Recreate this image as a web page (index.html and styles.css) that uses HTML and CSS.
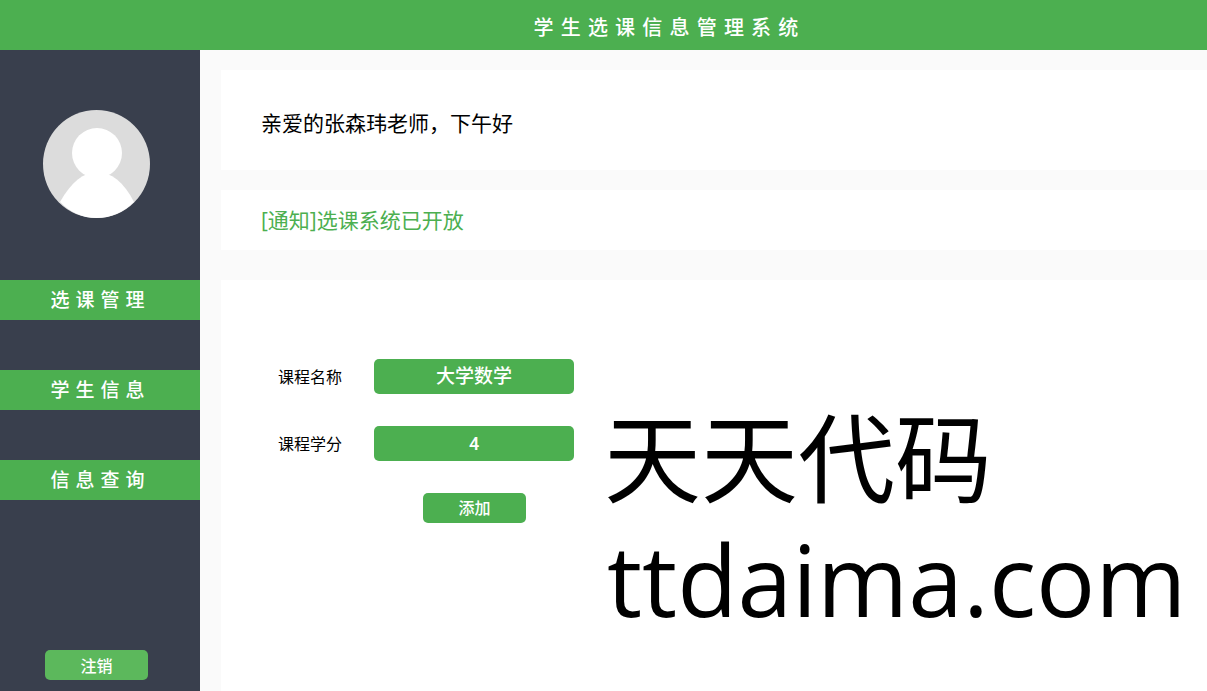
FILE: index.html
```html
<!DOCTYPE html>
<html>
    <head>
        <meta http-equiv="Content-Type" content="text/html; charset=UTF-8">
        <title>学生选课信息管理系统</title>
        <link rel="stylesheet" href="styles.css">
    </head>
    <body>
        <header class="top">学生选课信息管理系统</header>
        <div class="wrap">
            <aside class="side">
                <svg class="avatar" viewBox="0 0 107 108">
                    <ellipse cx="53.5" cy="54" rx="53.5" ry="54" fill="#dcdcdc"/>
                    <circle cx="54" cy="43" r="25" fill="#fff"/>
                    <path d="M17 92C28 72 41 62 54 62C68 62 81 72 91 92C81 102 68 108 53.5 108C39 108 27 102 17 92Z" fill="#fff"/>
                </svg>
                <ul class="nav">
                    <li>选课管理</li>
                    <li>学生信息</li>
                    <li>信息查询</li>
                </ul>
                <button class="logout">注销</button>
            </aside>
            <main class="content">
                <section class="card hello">亲爱的张森玮老师，下午好</section>
                <section class="card notice">[通知]选课系统已开放</section>
                <section class="card panel">
                    <div class="row">
                        <label>课程名称</label>
                        <div class="field">大学数学</div>
                    </div>
                    <div class="row">
                        <label>课程学分</label>
                        <div class="field field-num">4</div>
                    </div>
                    <button class="add">添加</button>
                </section>
            </main>
        </div>
        <div class="mark">
            <div class="mark-cn">天天代码</div>
            <div class="mark-en">ttdaima.com</div>
        </div>
    </body>
</html>
```

FILE: styles.css
```css
html {
    height: 100%;
}
body {
    height: 100%;
    margin: 0;
    overflow: hidden;
    display: flex;
    flex-direction: column;
    background: #fafafa;
    font-family: "Open Sans", "Noto Sans CJK SC", sans-serif;
}
.top {
    flex: none;
    height: 50px;
    line-height: 55px;
    background: #4caf50;
    color: white;
    text-align: center;
    font-size: 20px;
    font-weight: 500;
    letter-spacing: 7.2px;
    padding-left: 132px;
}
.wrap {
    flex: 1;
    display: flex;
    min-height: 0;
}
.side {
    flex: none;
    width: 200px;
    background: #393f4d;
    display: flex;
    flex-direction: column;
    align-items: center;
}
.avatar {
    display: block;
    width: 107px;
    height: 108px;
    margin-top: 60px;
    margin-right: 7px;
}
.nav {
    list-style: none;
    width: 100%;
    margin: 62px 0 0;
    padding: 0;
}
.nav li {
    height: 40px;
    line-height: 41px;
    margin-bottom: 50px;
    background: #4caf50;
    color: white;
    text-align: center;
    font-size: 19px;
    font-weight: 500;
    letter-spacing: 6px;
    padding-left: 1px;
}
.logout {
    margin-top: auto;
    margin-bottom: 11px;
    margin-right: 7px;
    width: 103px;
    height: 30px;
    padding: 0;
    border: 0;
    border-radius: 5px;
    background: #5cb85c;
    color: white;
    font-family: inherit;
    font-size: 16px;
    font-weight: 500;
}
.content {
    flex: 1;
    display: flex;
    flex-direction: column;
    padding: 20px 0 0 21px;
    min-width: 0;
}
.card {
    background: white;
}
.hello {
    flex: none;
    height: 100px;
    line-height: 106px;
    margin-bottom: 20px;
    padding-left: 40px;
    font-size: 21px;
    color: black;
}
.notice {
    flex: none;
    height: 60px;
    line-height: 61px;
    margin-bottom: 30px;
    padding-left: 40px;
    font-size: 21px;
    color: #4caf50;
}
.panel {
    flex: 1;
    padding-top: 79px;
}
.row {
    display: flex;
    align-items: center;
    height: 35px;
    margin-bottom: 32px;
}
.row label {
    width: 153px;
    padding-right: 32px;
    padding-bottom: 2px;
    box-sizing: border-box;
    text-align: right;
    font-size: 16px;
    color: black;
}
.field {
    width: 200px;
    height: 35px;
    line-height: 35px;
    border-radius: 5px;
    background: #4caf50;
    color: white;
    text-align: center;
    font-size: 19px;
    font-weight: 500;
}
.field-num {
    font-family: Roboto, sans-serif;
    font-size: 18px;
    font-weight: 500;
}
.add {
    display: block;
    width: 103px;
    height: 30px;
    margin-left: 202px;
    padding: 0 0 2px;
    border: 0;
    border-radius: 5px;
    background: #4caf50;
    color: white;
    font-family: inherit;
    font-size: 16px;
    font-weight: 500;
}
/* watermark sits over the page */
.mark {
    position: absolute;
    left: 604px;
    top: 395px;
    color: black;
    white-space: nowrap;
}
.mark-cn {
    font-size: 97px;
    line-height: 125px;
}
.mark-en {
    font-size: 98.5px;
    line-height: 119px;
    margin-left: 3px;
}
```
